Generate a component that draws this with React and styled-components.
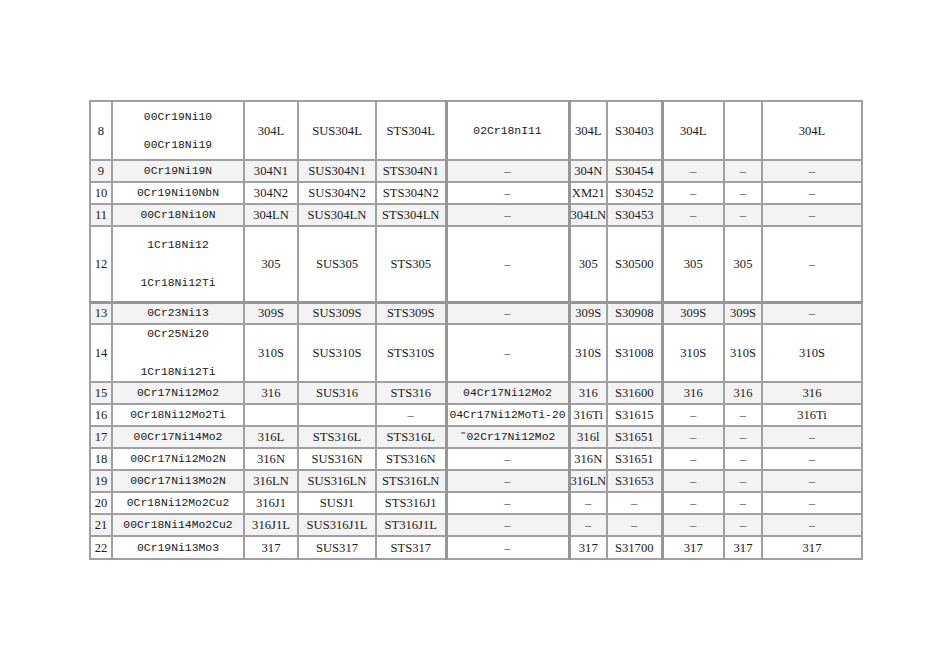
import React from 'react';
import styled, { createGlobalStyle } from 'styled-components';

const GlobalStyle = createGlobalStyle`
  body {
    margin: 0;
    background: #ffffff;
    font-family: "Liberation Serif", "Noto Sans CJK SC", serif;
  }
`;

const Page = styled.div`
  width: 950px;
  height: 672px;
  padding: 100px 0 0 89px;
  box-sizing: border-box;
`;

const Table = styled.table`
  border-collapse: collapse;
  table-layout: fixed;
  width: 772px;
  color: #1a1a1a;
  border: 2px solid #a0a0a0;
`;

const Row = styled.tr`
  height: ${p => p.$h}px;
  background: ${p => (p.$shade ? '#f3f3f3' : '#ffffff')};
  border-bottom: ${p => (p.$thick ? '3px solid #969696' : '2px solid #a0a0a0')};
`;

const Cell = styled.td`
  border-left: 2px solid #a0a0a0;
  border-right: 2px solid #a0a0a0;
  padding: 0;
  text-align: center;
  vertical-align: middle;
  white-space: nowrap;
  overflow: hidden;
  color: ${p => (p.$dash ? '#555555' : '#1a1a1a')};
  font-family: ${p => (p.$mono ? '"Liberation Mono", "Noto Sans CJK SC", monospace' : '"Liberation Serif", "Noto Sans CJK SC", serif')};
  font-size: ${p => (p.$mono ? '11.4px' : '12.6px')};
  line-height: 18px;
  &:nth-child(5),
  &:nth-child(6),
  &:nth-child(8) {
    border-right: 3px solid #969696;
  }
`;

const Stack = styled.div`
  display: flex;
  flex-direction: column;
  justify-content: space-between;
  align-items: center;
  height: ${p => p.$h}px;
`;

const widths = [22, 132, 54, 78, 70, 123, 38, 55, 62, 38, 100];

const rows = [
  { n: '8', h: 59, grade: ['00Cr19Ni10', '00Cr18Ni19'], gap: 46, c: ['304L', 'SUS304L', 'STS304L', '02Cr18nI11', '304L', 'S30403', '304L', '', '304L'] },
  { n: '9', h: 22, shade: true, grade: '0Cr19Ni19N', c: ['304N1', 'SUS304N1', 'STS304N1', '–', '304N', 'S30454', '–', '–', '–'] },
  { n: '10', h: 22, grade: '0Cr19Ni10NbN', c: ['304N2', 'SUS304N2', 'STS304N2', '–', 'XM21', 'S30452', '–', '–', '–'] },
  { n: '11', h: 22, shade: true, grade: '00Cr18Ni10N', c: ['304LN', 'SUS304LN', 'STS304LN', '–', '304LN', 'S30453', '–', '–', '–'] },
  { n: '12', h: 76, thick: true, grade: ['1Cr18Ni12', '1Cr18Ni12Ti'], gap: 56, c: ['305', 'SUS305', 'STS305', '–', '305', 'S30500', '305', '305', '–'] },
  { n: '13', h: 22, shade: true, grade: '0Cr23Ni13', c: ['309S', 'SUS309S', 'STS309S', '–', '309S', 'S30908', '309S', '309S', '–'] },
  { n: '14', h: 58, grade: ['0Cr25Ni20', '1Cr18Ni12Ti'], gap: 56, c: ['310S', 'SUS310S', 'STS310S', '–', '310S', 'S31008', '310S', '310S', '310S'] },
  { n: '15', h: 22, shade: true, grade: '0Cr17Ni12Mo2', c: ['316', 'SUS316', 'STS316', '04Cr17Ni12Mo2', '316', 'S31600', '316', '316', '316'] },
  { n: '16', h: 22, grade: '0Cr18Ni12Mo2Ti', c: ['', '', '–', '04Cr17Ni12MoTi-20', '316Ti', 'S31615', '–', '–', '316Ti'] },
  { n: '17', h: 22, shade: true, grade: '00Cr17Ni14Mo2', c: ['316L', 'STS316L', 'STS316L', '˜02Cr17Ni12Mo2', '316l', 'S31651', '–', '–', '–'] },
  { n: '18', h: 22, grade: '00Cr17Ni12Mo2N', c: ['316N', 'SUS316N', 'STS316N', '–', '316N', 'S31651', '–', '–', '–'] },
  { n: '19', h: 22, shade: true, grade: '00Cr17Ni13Mo2N', c: ['316LN', 'SUS316LN', 'STS316LN', '–', '316LN', 'S31653', '–', '–', '–'] },
  { n: '20', h: 22, grade: '0Cr18Ni12Mo2Cu2', c: ['316J1', 'SUSJ1', 'STS316J1', '–', '–', '–', '–', '–', '–'] },
  { n: '21', h: 22, shade: true, grade: '00Cr18Ni14Mo2Cu2', c: ['316J1L', 'SUS316J1L', 'ST316J1L', '–', '–', '–', '–', '–', '–'] },
  { n: '22', h: 23, grade: '0Cr19Ni13Mo3', c: ['317', 'SUS317', 'STS317', '–', '317', 'S31700', '317', '317', '317'] },
];

const App = () => (
  <Page>
    <GlobalStyle />
    <Table>
      <colgroup>
        {widths.map((w, i) => (
          <col key={i} style={{ width: w }} />
        ))}
      </colgroup>
      <tbody>
        {rows.map(r => (
          <Row key={r.n} $h={r.h} $shade={r.shade} $thick={r.thick}>
            <Cell>{r.n}</Cell>
            <Cell $mono>
              {Array.isArray(r.grade) ? (
                <Stack $h={r.gap}>
                  <span>{r.grade[0]}</span>
                  <span>{r.grade[1]}</span>
                </Stack>
              ) : (
                r.grade
              )}
            </Cell>
            {r.c.map((v, i) => (
              <Cell key={i} $mono={i === 3 && v !== '–'} $dash={v === '–'}>
                {v}
              </Cell>
            ))}
          </Row>
        ))}
      </tbody>
    </Table>
  </Page>
);

export default App;
